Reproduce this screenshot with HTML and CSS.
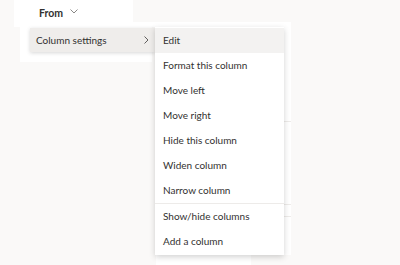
FILE: index.html
```html
<!DOCTYPE html>
<html>
<head>
<meta charset="utf-8">
<link rel="stylesheet" href="styles.css">
</head>
<body>
<div class="page">
  <div class="header">
    <div class="from-cell">
      <span class="from">From</span>
      <svg class="down" width="8" height="5" viewBox="0 0 8 5"><path d="M0.5 0.5 L4 4 L7.5 0.5" fill="none" stroke="#8a8886" stroke-width="1"/></svg>
    </div>
    <div class="header-right"><div class="grey-box"></div></div>
  </div>
  <div class="rows">
    <div class="left-panel"></div>
    <div class="list-panel">
      <div class="line l1"></div>
      <div class="line l2"></div>
      <div class="line l3"></div>
    </div>
  </div>
  <div class="footer"><div class="footer-box"></div></div>

  <div class="menu1">
    <span>Column settings</span>
    <svg class="right" width="5" height="8" viewBox="0 0 5 8"><path d="M0.5 0.5 L4 4 L0.5 7.5" fill="none" stroke="#605e5c" stroke-width="1"/></svg>
  </div>
  <ul class="menu2">
    <li class="active">Edit</li>
    <li>Format this column</li>
    <li>Move left</li>
    <li>Move right</li>
    <li>Hide this column</li>
    <li>Widen column</li>
    <li>Narrow column</li>
    <li class="divider"></li>
    <li>Show/hide columns</li>
    <li>Add a column</li>
  </ul>
</div>
</body>
</html>
```

FILE: styles.css
```css
html, body {
  margin: 0;
  padding: 0;
  background: #faf9f8;
  font-family: "Lato", "Open Sans", "Noto Sans", sans-serif;
  color: #323130;
}
.page {
  position: relative;
  width: 400px;
  height: 265px;
  overflow: hidden;
}
.header {
  margin-left: 14px;
  width: 277px;
  height: 27px;
  background: #ffffff;
  display: flex;
}
.from-cell {
  width: 119px;
  display: flex;
  align-items: center;
  padding-left: 25px;
  box-sizing: border-box;
  height: 27px;
}
.from {
  font-size: 10.5px;
  font-weight: 700;
  color: #323130;
  position: relative;
  top: -1px;
}
.down { margin-left: 7px; position: relative; top: -2px; }
.header-right { flex: 1; }
.grey-box { height: 22px; background: #faf9f8; }
.rows {
  display: flex;
  height: 228px;
}
.left-panel {
  margin-left: 20px;
  width: 132px;
  height: 35px;
  background: #ffffff;
}
.list-panel {
  margin-left: 3px;
  width: 136px;
  height: 228px;
  background: #ffffff;
  border-left: 1px solid #f3f2f1;
  box-sizing: border-box;
  display: flex;
  flex-direction: column;
}
.line { height: 1px; background: #edebe9; }
.l1 { margin-top: 94px; }
.l2 { margin-top: 82px; }
.l3 { margin-top: 11px; }
.footer { display: flex; }
.footer-box {
  margin-left: 156px;
  width: 95px;
  height: 10px;
  background: #ffffff;
}
.menu1 {
  position: absolute;
  left: 30px;
  top: 28px;
  width: 125px;
  height: 24px;
  background: #efedeb;
  box-shadow: 0 1px 4px rgba(0,0,0,0.16);
  display: flex;
  align-items: center;
  padding-left: 6px;
  box-sizing: border-box;
  font-size: 10px;
}
.menu1 span { flex: 1; }
.right { margin-right: 6px; }
.menu2 {
  position: absolute;
  left: 155px;
  top: 27px;
  width: 129px;
  margin: 0;
  padding: 1px 0 1px;
  list-style: none;
  background: #ffffff;
  box-shadow: 0 2px 6px rgba(0,0,0,0.18);
  font-size: 10px;
}
.menu2 li {
  height: 25px;
  line-height: 25px;
  padding-left: 8px;
}
.menu2 li.active { background: #f3f2f1; }
.menu2 li.divider {
  height: 1px;
  padding: 0;
  background: #edebe9;
}
```
